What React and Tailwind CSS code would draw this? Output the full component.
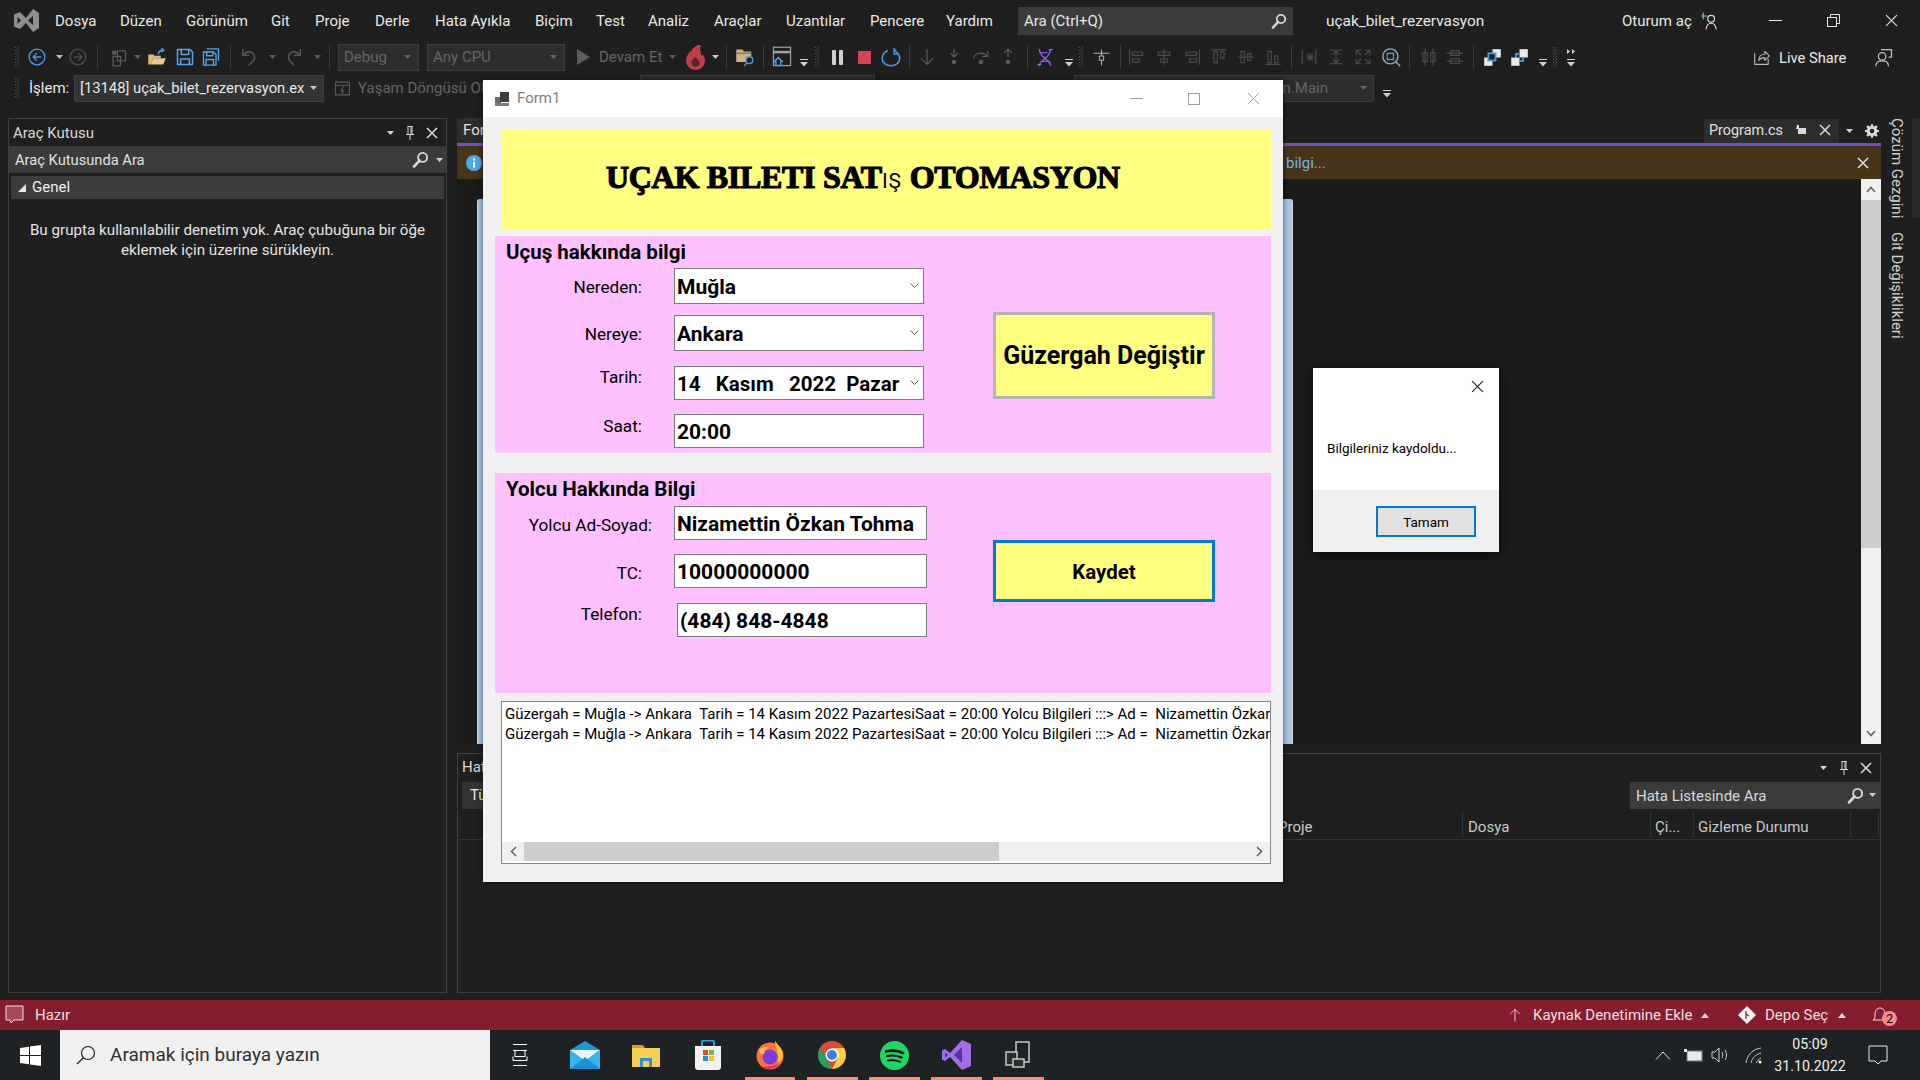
import React from "react";

const Strip = ({ items, className }) => {
  let prev = 0;
  return (
    <div className={"flex items-center " + (className || "")}>
      {items.map((it, i) => {
        const [x, w, node, start] = it;
        const m = x - prev;
        prev = x + w;
        return (
          <div key={i} className={start ? "flex items-center justify-start shrink-0 whitespace-nowrap" : "flex items-center justify-center shrink-0 whitespace-nowrap"} style={{ marginLeft: m, width: w }}>
            {node}
          </div>
        );
      })}
    </div>
  );
};
const C = (c, w, node) => [c - w / 2, w, node];
const L = (x, w, node) => [x, w, node, true];

const Ic = ({ s = 16, w, h, vb = "0 0 16 16", sw = 1, color = "currentColor", fill = "none", children }) => (
  <svg width={w || s} height={h || s} viewBox={vb} fill={fill} stroke={color} strokeWidth={sw} strokeLinecap="round" strokeLinejoin="round">{children}</svg>
);

const Grip = () => (
  <svg width="7" height="22" viewBox="0 0 7 22" fill="#555">
    {[1, 4, 7, 10, 13, 16, 19].map((y) => (
      <g key={y}><rect x="1" y={y} width="1" height="1" /><rect x="4" y={y} width="1" height="1" /><rect x="2.5" y={y + 1.5} width="1" height="1" /></g>
    ))}
  </svg>
);
const Sep = () => <div className="w-px h-[24px] bg-[#3a3a3a]" />;
const Arr = ({ c = "#8a8a8a" }) => <svg width="7" height="4" viewBox="0 0 7 4"><path d="M0 0h7L3.5 4z" fill={c} /></svg>;
const ArrUp = ({ c = "#f0d8dc" }) => <svg width="8" height="5" viewBox="0 0 8 5"><path d="M0 5h8L4 0z" fill={c} /></svg>;
const Ovf = () => <svg className="mt-[11px]" width="8" height="8" viewBox="0 0 8 8"><path d="M0 .5h8" stroke="#cfcfcf" strokeWidth="1" /><path d="M0 3h8L4 7.500z" fill="#cfcfcf" /></svg>;

const Back = () => <Ic s={18} color="#4a9ae8" sw={1.2}><circle cx="8" cy="8" r="7" /><path d="M11.5 8h-7M7.5 5 4.5 8l3 3" /></Ic>;
const Fwd = () => <Ic s={18} color="#4e4e4e" sw={1.2}><circle cx="8" cy="8" r="7" /><path d="M4.5 8h7M8.5 5l3 3-3 3" /></Ic>;
const NewI = () => <Ic s={20} color="#5d5d5d"><path d="M5 3v3M3.5 4.5h3M3.8 3.3l2.4 2.4M6.2 3.3 3.8 5.7" /><rect x="7.5" y="3" width="6.5" height="8" /><rect x="4" y="7.5" width="6" height="7.5" /></Ic>;
const OpenI = () => (
  <svg width="20" height="20" viewBox="0 0 16 16"><path d="M1 14V6h4l1 1h5v2H5l-2 5z" fill="#dcb67a" /><path d="M3 14l2-5h10l-2 5z" fill="#e8c88e" /><path d="M9 6c0-2.5 2-3.5 4-3.5M11.5 1l2 1.5-2 1.5" stroke="#4a9ae8" strokeWidth="1.2" fill="none" /></svg>
);
const Save = () => <Ic s={20} color="#5aa2ea" sw={1.2}><path d="M2 2h10l2 2v10H2z" /><path d="M5 2v4h6V2M4.5 14V9.5h7V14" /></Ic>;
const SaveAll = () => <Ic s={20} color="#5aa2ea" sw={1.1}><path d="M5 1.5h9v9" /><path d="M2 4h8l2 2v8.5H2z" /><path d="M4.5 4v3h5V4M4 14.5V10h6v4.5" /></Ic>;
const Undo = () => <Ic s={20} color="#5d5d5d" sw={1.1}><path d="M3 2v4.5h4.5" /><path d="M3.5 6.5C5 4 8 3 10.5 4.5c2.5 1.5 2.5 5 .5 7l-3 3" /></Ic>;
const Redo = () => <Ic s={20} color="#5d5d5d" sw={1.1}><path d="M13 2v4.5H8.5" /><path d="M12.5 6.5C11 4 8 3 5.5 4.5c-2.5 1.5-2.5 5-.5 7l3 3" /></Ic>;
const Fire = () => (
  <svg width="19" height="25" viewBox="0 0 16 21"><path d="M12 0c-4 1-7 3-7 6 0 .8.2 1.500.4 2C4.500 7.500 4 6.500 4 5.500 2 7.500.5 10 .5 13c0 4.500 3.300 7.500 7.500 7.500s7.500-3 7.500-7.500c0-2-.7-3.500-1.500-4.500 0 1-.3 2-1 2.500C13 8 10.500 5 12 0z" fill="#c23b46" stroke="#d9604e" strokeWidth="0.6" /><path d="M8 10c-2.500 1.500-3.500 3-3.500 5 0 2 1.500 3.500 3.500 3.500s3.500-1.500 3.500-3.500c0-2-2-3-3.500-5z" fill="#5a262b" /></svg>
);
const FolderSearch = () => (
  <svg width="20" height="20" viewBox="0 0 16 16"><path d="M1 2h5l1 1.500h6V12H1z" fill="#cdb283" /><path d="M1 5h12" stroke="#8a7550" /><circle cx="11.500" cy="10.500" r="2.700" fill="#1f1f1f" stroke="#4a9ae8" strokeWidth="1.1" /><path d="M9.500 12.500 7.500 15" stroke="#4a9ae8" strokeWidth="1.1" /></svg>
);
const WinHome = () => (
  <svg width="20" height="22" viewBox="0 0 16 18" fill="none"><rect x="1" y="1" width="14" height="15" stroke="#a0a0a0" /><path d="M1 5h14" stroke="#a0a0a0" strokeWidth="2" /><path d="M1.500 13 5 9.500 8.500 13M3 12v4h4v-4" stroke="#4a9ae8" strokeWidth="1.2" fill="#1f1f1f" /></svg>
);
const Pause = () => <div className="flex gap-[3px]"><div className="w-[4px] h-[15px] bg-[#d0d0d0] rounded-[1px]" /><div className="w-[4px] h-[15px] bg-[#d0d0d0] rounded-[1px]" /></div>;
const Restart = () => <Ic s={20} color="#4a9ae8" sw={1.2}><path d="M10.500 1.500v4h3.500" /><path d="M5 3C2.500 4.500 1 6.500 1 9c0 3.500 3 6 7 6s7-2.500 7-6c0-1.500-.5-2.500-1.500-3.500-1-1-2-2.500-3-4" /></Ic>;
const StepD = () => <Ic s={18} color="#5d5d5d"><path d="M8 1.500v13M3 9.500l5 5 5-5" /></Ic>;
const StepI = () => <Ic s={18} color="#5d5d5d"><path d="M8 1v7M5 5l3 3 3-3" /><circle cx="8" cy="12.500" r="1.500" fill="#5d5d5d" /></Ic>;
const StepO = () => <Ic s={18} color="#5d5d5d"><path d="M1.500 9C2.500 4 10 3 13 7M14 3v4.500H9.500" /><circle cx="8" cy="12.500" r="1.500" fill="#5d5d5d" /></Ic>;
const StepU = () => <Ic s={18} color="#5d5d5d"><path d="M8 8V1M5 4l3-3 3 3" /><circle cx="8" cy="12.500" r="1.500" fill="#5d5d5d" /></Ic>;
const Dna = () => (
  <svg width="20" height="20" viewBox="0 0 16 16" fill="none"><path d="M3.500 15c0-5 9-6 9-13.500" stroke="#7c5ae0" strokeWidth="1.200" /><path d="M3.500 1.500C3.500 9 12.500 10 12.500 15" stroke="#8a5cd8" strokeWidth="1.200" /><path d="M4 4.500h6M6 11.500h6" stroke="#7c5ae0" /><path d="M11 2h3M2 14h3" stroke="#4a9ae8" /></svg>
);
const Thing = () => <Ic s={17} color="#b0b0b0"><path d="M1 4h14M8 1v14" /><rect x="6" y="6.500" width="4" height="4" fill="#1f1f1f" /></Ic>;
const Al = ({ d }) => <Ic s={18} color="#4c4c4c"><path d={d} /></Ic>;
const aligns = [
  "M1.500 1.500v13M4 3.500h9v3H4zM4 9.500h6v3H4z",
  "M8 1.500v13M3 3.500h10v3H3zM5 9.500h6v3H5z",
  "M14.500 1.500v13M3 3.500h9v3H3zM6 9.500h6v3H6z",
  "M1.500 1.500h13M3.500 3v10h3V3zM9.500 3v6h3V3z",
  "M1.500 8h13M3.500 3v10h3V3zM9.500 5v6h3V5z",
  "M1.500 14.500h13M3.500 3v10h3V3zM9.500 7v6h3V7z",
  "M2 2v12M5.500 8h7M9 4.500v7M6.500 5.500l5 5M11.500 5.500l-5 5M14 2v12",
  "M3 2h10M3 14h10M8 3v10M5.500 5.500 8 3l2.500 2.500M5.500 10.500 8 13l2.500-2.500",
  "M2 6V2h4M10 2h4v4M2 10v4h4M14 10v4h-4M3 3l3 3M13 3l-3 3M3 13l3-3M13 13l-3-3",
];
const Zoom = () => <Ic s={20} color="#a8a8a8" sw={1.1}><circle cx="7.500" cy="7.500" r="6" /><path d="m12 12 3 3" /><path d="M5 7V5h2M10 7V5H8M5 8v2h2M10 8v2H8" stroke="#4a9ae8" /></Ic>;
const Dup1 = () => (
  <svg width="19" height="19" viewBox="0 0 16 16"><rect x="8" y="1" width="7" height="7" fill="#e8e8e8" /><rect x="1" y="8" width="7" height="7" fill="#e8e8e8" /><rect x="4.500" y="4.500" width="6" height="6" fill="#1f1f1f" stroke="#4a9ae8" strokeWidth="1.500" /></svg>
);
const Dup2 = () => (
  <svg width="19" height="19" viewBox="0 0 16 16"><rect x="8" y="1" width="7" height="7" fill="#e8e8e8" /><rect x="1" y="8" width="7" height="7" fill="#e8e8e8" /><path d="M8 5H5v3M11 8v3H8" fill="none" stroke="#4a9ae8" strokeWidth="1.500" /></svg>
);
const Search = ({ s = 17, c = "#d8d8d8" }) => (
  <svg width={s} height={s} viewBox="0 0 16 16" fill="none"><circle cx="10" cy="6" r="4.200" stroke={c} strokeWidth="1.800" /><path d="M7 9 2 14.500" stroke={c} strokeWidth="2.600" strokeLinecap="round" /></svg>
);
const Pin = ({ c = "#d8d8d8" }) => <svg width="12" height="16" viewBox="0 0 12 16" fill="none" stroke={c}><path d="M3.500 1.500h5M4 1.500v8M8 1.500v8M2 9.500h8M6 9.500V15" /><path d="M7 2v7" /></svg>;
const Cross = ({ s = 12, c = "#d8d8d8", sw = 1.600 }) => <svg width={s} height={s} viewBox="0 0 12 12" stroke={c} strokeWidth={sw} fill="none"><path d="M1 1l10 10M11 1 1 11" /></svg>;
const Chev = () => <svg width="9" height="6" viewBox="0 0 9 6" fill="none" stroke="#606060"><path d="m.5.500 4 4 4-4" /></svg>;

const Logo = () => (
  <svg width="26" height="25" viewBox="0 0 26 25"><path d="M0 6.500 6 4l6 6 7-9 6 4v15l-6 4-7-9-6 6-6-2.500z" fill="#8f8f8f" /><path d="M3.500 9v7l3.500-3.500zM19 8l-5 4.500 5 4.500z" fill="#1f1f1f" /></svg>
);

const row2 = [
  C(17, 7, <Grip />), C(37, 18, <Back />), C(59, 7, <Arr c="#c0c0c0" />), C(78, 18, <Fwd />), C(97, 1, <Sep />), C(118, 20, <NewI />), C(137, 7, <Arr c="#5d5d5d" />), C(157, 20, <OpenI />), C(185, 20, <Save />), C(211, 20, <SaveAll />), C(230, 1, <Sep />), C(249, 20, <Undo />), C(272, 7, <Arr c="#5d5d5d" />), C(294, 20, <Redo />), C(317, 7, <Arr c="#5d5d5d" />), C(329, 1, <Sep />),
  [338, 81, <div className="w-full h-[27px] bg-[#2d2d2d] border border-[#3c3c3c] flex items-center justify-between pl-[5px] pr-[7px] text-[#656565]"><span>Debug</span><Arr c="#656565" /></div>],
  [427, 138, <div className="w-full h-[27px] bg-[#2d2d2d] border border-[#3c3c3c] flex items-center justify-between pl-[5px] pr-[7px] text-[#656565]"><span>Any CPU</span><Arr c="#656565" /></div>],
  C(583, 13, <svg width="13" height="16" viewBox="0 0 13 16"><path d="M0 0l13 8-13 8z" fill="#5d5d5d" /></svg>),
  L(599, 66, <span className="text-[#656565]">Devam Et</span>), C(672, 7, <Arr c="#5d5d5d" />), C(695, 19, <Fire />), C(715, 7, <Arr c="#c8c8c8" />), C(726, 1, <Sep />), C(745, 20, <FolderSearch />), C(763, 1, <Sep />), C(782, 20, <WinHome />), C(804, 9, <Ovf />), C(817, 7, <Grip />), C(837, 11, <Pause />),
  C(864, 13, <div className="w-[13px] h-[13px] bg-[#d24453]" />), C(891, 20, <Restart />), C(909, 1, <Sep />), C(927, 18, <StepD />), C(954, 18, <StepI />), C(981, 18, <StepO />), C(1008, 18, <StepU />), C(1027, 1, <Sep />), C(1045, 20, <Dna />), C(1069, 9, <Ovf />), C(1081, 7, <Grip />), C(1101, 17, <Thing />), C(1120, 1, <Sep />),
  C(1137, 18, <Al d={aligns[0]} />), C(1164, 18, <Al d={aligns[1]} />), C(1192, 18, <Al d={aligns[2]} />), C(1219, 18, <Al d={aligns[3]} />), C(1246, 18, <Al d={aligns[4]} />), C(1273, 18, <Al d={aligns[5]} />), C(1291, 1, <Sep />), C(1309, 18, <Al d={aligns[6]} />), C(1336, 18, <Al d={aligns[7]} />), C(1363, 18, <Al d={aligns[8]} />), C(1391, 20, <Zoom />), C(1409, 1, <Sep />),
  C(1429, 18, <Al d="M4.500 1v14M11.500 1v14M2.500 4h4v8h-4zM9.500 4h4v8h-4z" />), C(1455, 18, <Al d="M1 4.500h14M1 11.500h14M4 2.500h8v4H4zM4 9.500h8v4H4z" />), C(1473, 1, <Sep />), C(1492, 19, <Dup1 />), C(1519, 19, <Dup2 />), C(1543, 9, <Ovf />), C(1555, 7, <Grip />),
  C(1571, 9, <div className="flex flex-col items-center gap-[5px] mt-[2px]"><svg width="8" height="5" viewBox="0 0 8 5" fill="#cfcfcf"><path d="M0 0l3 2.500L0 5zM5 0l3 2.500L5 5z" /></svg><svg width="8" height="8" viewBox="0 0 8 8"><path d="M0 .5h8" stroke="#cfcfcf" strokeWidth="1" /><path d="M0 3h8L4 7.500z" fill="#cfcfcf" /></svg></div>),
  C(1762, 18, <Ic s={18} color="#b8b8b8"><path d="M1.500 5v9.500h12V10" /><path d="M5 11c0-4 3-5.500 5.500-5.500V3l4 4-4 4V8.500C8 8.500 6 9.500 5 11z" /></Ic>),
  L(1779, 70, <span className="text-[#e8e8e8] text-[14.7px] pt-[2px]">Live Share</span>),
  C(1884, 20, <Ic s={20} color="#c0c0c0"><circle cx="6.500" cy="7.500" r="3" /><path d="M1.500 15c0-3 2-4 5-4s5 1 5 4" /><path d="M6 2h8v6h-2" /></Ic>),
];

const menu = [[55, "Dosya"], [120, "Düzen"], [186, "Görünüm"], [271, "Git"], [315, "Proje"], [375, "Derle"], [435, "Hata Ayıkla"], [535, "Biçim"], [596, "Test"], [648, "Analiz"], [714, "Araçlar"], [786, "Uzantılar"], [870, "Pencere"], [946, "Yardım"]];
const menuW = [45, 50, 65, 25, 40, 40, 80, 45, 35, 45, 55, 65, 55, 50];

const Field = ({ w, chev, children }) => (
  <div className={"h-full bg-white border border-[#7a7a7a] flex items-center justify-between pl-[2px] pr-[3px] text-black font-bold text-[21px] whitespace-nowrap " + w}>
    <span className="pt-[3px]">{children}</span>
    {chev && <span className="mr-[1px]"><Chev /></span>}
  </div>
);
const Lab = ({ cls, children }) => <div className={"text-right text-[17.2px] text-black whitespace-nowrap " + cls}>{children}</div>;

const line = "Güzergah = Muğla -> Ankara  Tarih = 14 Kasım 2022 PazartesiSaat = 20:00 Yolcu Bilgileri :::> Ad =  Nizamettin Özkan Tohma TC = 10000000000";

const Form = () => (
  <div className="absolute left-[483px] top-[80px] w-[800px] h-[802px] flex flex-col bg-[#f0f0f0] shadow-[0_0_6px_rgba(0,0,0,0.6)]">
    <div className="h-[37px] bg-white flex items-center">
      <Strip className="w-full" items={[
        C(19, 16, <svg width="16" height="16" viewBox="0 0 16 16"><rect x="1" y="6" width="6" height="9" fill="#6b6b6b" /><rect x="6" y="1" width="9" height="10" fill="#3c3c3c" /><rect x="1" y="12" width="14" height="3" fill="#7a7a7a" /></svg>),
        L(34, 50, <span className="text-[15px] text-[#7f7f7f]">Form1</span>),
        C(653, 13, <div className="w-[13px] h-px bg-[#a0a0a0]" />),
        C(711, 12, <div className="w-[12px] h-[12px] border border-[#a0a0a0]" />),
        C(770, 13, <Cross s={13} c="#a0a0a0" sw={0.9} />),
      ]} />
    </div>
    <div className="ml-[18px] mt-[12px] w-[770px] h-[101px] bg-[#ffff80] flex items-center shrink-0">
      <div className="ml-[105px] mb-[5px] text-black font-['Liberation_Serif',serif] font-bold text-[32px] tracking-[-0.3px] [-webkit-text-stroke:1.2px_black] whitespace-nowrap leading-none">
        UÇAK BILETI SAT<span className="font-['Roboto',sans-serif] font-normal text-[21px] [-webkit-text-stroke:0px] tracking-[1px]">IŞ</span> OTOMASYON
      </div>
    </div>

    <div className="relative ml-[12px] mt-[6px] w-[776px] h-[217px] bg-[#ffc0ff] border-b border-[#eed2ee] flex shrink-0">
      <div className="absolute left-[190px] right-0 top-[13px] h-px bg-[#f2c8f2]" />
      <div className="w-[498px]">
        <div className="h-[29px] pl-[11px] pt-[3px] leading-[26px] font-bold text-[20.5px] text-black">Uçuş hakkında bilgi</div>
        <div className="flex items-center h-[36px] mt-[3px]"><Lab cls="w-[147px] mr-[32px] mt-[4px]">Nereden:</Lab><Field w="w-[250px]" chev>Muğla</Field></div>
        <div className="flex items-center h-[36px] mt-[11px]"><Lab cls="w-[147px] mr-[32px] mt-[4px]">Nereye:</Lab><Field w="w-[250px]" chev>Ankara</Field></div>
        <div className="flex items-center h-[34px] mt-[15px]"><Lab cls="w-[147px] mr-[32px] mb-[10px]">Tarih:</Lab><Field w="w-[250px]" chev><span className="whitespace-pre text-[20.5px]">14   Kasım   2022  Pazar</span></Field></div>
        <div className="flex items-center h-[34px] mt-[14px]"><Lab cls="w-[147px] mr-[32px] mb-[8px]">Saat:</Lab><Field w="w-[250px]">20:00</Field></div>
      </div>
      <div className="mt-[76px] w-[222px] h-[87px] bg-[#ffff80] border-[3px] border-[#b4b4b4] flex items-center justify-center font-bold text-[25px] text-black">Güzergah Değiştir</div>
    </div>

    <div className="relative ml-[12px] mt-[20px] w-[776px] h-[220px] bg-[#ffc0ff] flex shrink-0">
      <div className="absolute left-[200px] right-0 top-[13px] h-px bg-[#f2c8f2]" />
      <div className="w-[498px]">
        <div className="h-[29px] pl-[11px] pt-[3px] leading-[26px] font-bold text-[20.5px] text-black">Yolcu Hakkında Bilgi</div>
        <div className="flex items-center h-[34px] mt-[4px]"><Lab cls="w-[157px] mr-[22px] mt-[6px]">Yolcu Ad-Soyad:</Lab><Field w="w-[253px]">Nizamettin Özkan Tohma</Field></div>
        <div className="flex items-center h-[34px] mt-[14px]"><Lab cls="w-[147px] mr-[32px] mt-[6px]">TC:</Lab><Field w="w-[253px]">10000000000</Field></div>
        <div className="flex items-center h-[34px] mt-[15px]"><Lab cls="w-[147px] mr-[35px] mb-[10px]">Telefon:</Lab><Field w="w-[250px]">(484) 848-4848</Field></div>
      </div>
      <div className="mt-[67px] w-[222px] h-[62px] bg-[#ffff80] border-[3px] border-[#0078d7] flex items-center justify-center pt-[3px] font-bold text-[20.5px] text-black">Kaydet</div>
    </div>

    <div className="ml-[18px] mt-[8px] w-[770px] h-[163px] bg-white border border-[#828790] flex flex-col shrink-0 overflow-hidden">
      <div className="flex-1 pl-[3px] pt-[2px] overflow-hidden text-[15px] leading-[20px] text-black whitespace-pre">
        <div>{line}</div>
        <div>{line}</div>
      </div>
      <div className="h-[19px] mb-[2px] bg-[#f0f0f0] flex items-center">
        <div className="w-[22px] flex justify-center"><svg width="7" height="11" viewBox="0 0 7 11" fill="none" stroke="#606060" strokeWidth="1.500"><path d="M6 1 1.500 5.500 6 10" /></svg></div>
        <div className="w-[475px] h-full bg-[#cdcdcd]" />
        <div className="flex-1" />
        <div className="w-[22px] flex justify-center"><svg width="7" height="11" viewBox="0 0 7 11" fill="none" stroke="#606060" strokeWidth="1.500"><path d="M1 1l4.500 4.500L1 10" /></svg></div>
      </div>
    </div>
  </div>
);

const Dialog = () => (
  <div className="absolute left-[1313px] top-[368px] w-[186px] h-[184px] flex flex-col shadow-[0_2px_12px_rgba(0,0,0,0.7)]">
    <div className="h-[122px] bg-white flex flex-col">
      <div className="h-[36px] flex justify-end items-center pr-[15px]"><Cross s={13} c="#222" sw={1} /></div>
      <div className="pl-[14px] pt-[35px] text-[13.5px] leading-[18px] text-black whitespace-nowrap">Bilgileriniz kaydoldu...</div>
    </div>
    <div className="flex-1 bg-[#f0f0f0] pl-[63px] pt-[16px]">
      <div className="w-[100px] h-[31px] bg-[#e1e1e1] border-2 border-[#0078d7] flex items-center justify-center pt-[1px] text-[13.5px] text-black">Tamam</div>
    </div>
  </div>
);

const TBI = {
  task: <svg width="22" height="24" viewBox="0 0 22 24" fill="none" stroke="#fff"><path d="M2 1.500h14M2 7.500h14M2 13.500v4h14v-4M2 22.500h14M19 3v0M19 8v0" /><rect x="4" y="7.500" width="10" height="6" /></svg>,
  mail: <svg width="30" height="28" viewBox="0 0 30 28"><path d="M0 9 15 0l15 9v19H0z" fill="#1b9ad6" /><path d="M0 9h30L15 20z" fill="#e8f4fb" /><path d="M0 9l15 11L30 9v19H0z" fill="#37b5ec" /><path d="M0 28l15-12 15 12z" fill="#1e8fd0" /></svg>,
  folder: <svg width="28" height="24" viewBox="0 0 28 24"><path d="M0 2h11l2 3H0z" fill="#d49b1f" /><path d="M0 5h28v19H0z" fill="#f6cf55" /><path d="M8 24v-9h12v9h-3v-6h-6v6z" fill="#3a8ed8" /></svg>,
  store: <svg width="28" height="30" viewBox="0 0 28 30"><path d="M1 6h26v21c0 2-1 3-3 3H4c-2 0-3-1-3-3z" fill="#f2f2f2" /><path d="M8 6V2c0-1 1-1.500 2-1.500h8c1 0 2 .5 2 1.500v4" fill="none" stroke="#28a0e0" strokeWidth="2" /><rect x="9" y="10" width="5" height="5" fill="#e64a19" /><rect x="15" y="10" width="5" height="5" fill="#7cb342" /><rect x="9" y="16" width="5" height="5" fill="#1e90e0" /><rect x="15" y="16" width="5" height="5" fill="#fbc02d" /></svg>,
  firefox: <svg width="30" height="30" viewBox="0 0 30 30"><circle cx="15" cy="16" r="13.500" fill="#ff7139" /><path d="M20 0c1 4 8 8 8 15 0 3-2 6-5 8 2-8-3-14-3-23z" fill="#ffc22e" /><circle cx="15" cy="17" r="7.500" fill="#7a3fd8" /><path d="M4 10c3-3 7-4 10-2-3 1-5 3-5 6-2 1-4 0-5-4z" fill="#ffbd4f" /><path d="M7 27c5 3 14 2 18-4-4 3-12 4-18 4z" fill="#e31587" /></svg>,
  chrome: <svg width="28" height="28" viewBox="0 0 28 28"><circle cx="14" cy="14" r="14" fill="#dd4b39" /><path d="M14 28a14 14 0 0 1-12-21l7 12z" fill="#1da462" /><path d="M14 28a14 14 0 0 0 12-21H14l6 10z" fill="#ffcd46" /><circle cx="14" cy="14" r="6.500" fill="#fff" /><circle cx="14" cy="14" r="5" fill="#3b82e0" /></svg>,
  spotify: <svg width="29" height="29" viewBox="0 0 29 29" fill="none"><circle cx="14.500" cy="14.500" r="14.500" fill="#1ed760" /><path d="M6 10.500c6-1.500 12-1 17 1.500" stroke="#111" strokeWidth="2.600" strokeLinecap="round" /><path d="M7 15c5-1 10-.5 14.500 1.500" stroke="#111" strokeWidth="2.200" strokeLinecap="round" /><path d="M8 19.500c4.500-.8 8.500-.3 12 1.300" stroke="#111" strokeWidth="1.800" strokeLinecap="round" /></svg>,
  vs: <svg width="30" height="30" viewBox="0 0 30 30"><path d="M21 0 30 4v22l-9 4L9 17l-5 4-3-1.500v-9L4 9l5 4z" fill="#a06fe0" /><path d="M21 7v16l-8-8z" fill="#5b2fa8" /><path d="M4 12v6l3-3z" fill="#5b2fa8" /></svg>,
  multi: <svg width="26" height="28" viewBox="0 0 26 28" fill="none" stroke="#c8c8c8" strokeWidth="1.500"><rect x="11" y="1" width="13" height="20" /><rect x="1" y="11" width="11" height="13" fill="#2a2c2e" /><rect x="8" y="18" width="11" height="8" fill="#2a2c2e" /></svg>,
};

export default function App() {
  return (
    <div className="relative w-[1920px] h-[1080px] overflow-hidden bg-[#1f1f1f] flex flex-col font-['Roboto',sans-serif] text-[15px] text-[#e8e8e8]">
      {/* Title / menu */}
      <div className="relative h-[41px] shrink-0">
        <Strip className="h-full" items={[
          C(27, 26, <Logo />),
          ...menu.map((m, i) => L(m[0], menuW[i], <span className="pt-[2px]">{m[1]}</span>)),
          [1018, 275, <div className="w-full h-[28px] bg-[#3b3b3b] flex items-center justify-between pl-[6px] pr-[6px]"><span className="pt-[1px]">Ara (Ctrl+Q)</span><Search s={16} /></div>],
          L(1326, 165, <span className="text-[15.4px] pt-[2px]">uçak_bilet_rezervasyon</span>),
          L(1622, 72, <span className="pt-[2px]">Oturum aç</span>),
          C(1710, 18, <Ic s={18} color="#e0e0e0"><circle cx="9" cy="6" r="3" /><path d="M4.500 15c.5-3 2-5 4.500-5s4 2 4.500 5" /><path d="M2 1v5M0 3.500h5" stroke="#7fd67f" /></Ic>),
          C(1775, 13, <div className="w-[13px] h-px bg-[#e8e8e8]" />),
          C(1833, 13, <svg width="13" height="13" viewBox="0 0 13 13" fill="none" stroke="#e8e8e8"><rect x=".5" y="3.500" width="9" height="9" /><path d="M3.500 3.500v-3h9v9h-3" /></svg>),
          C(1891, 13, <Cross s={13} c="#e8e8e8" sw={1} />),
        ]} />
      </div>
      {/* Toolbar 1 */}
      <Strip className="h-[32px] shrink-0" items={row2} />
      {/* Toolbar 2 */}
      <Strip className="h-[30px] shrink-0" items={[
        C(17, 7, <Grip />),
        L(29, 42, <span>İşlem:</span>),
        [74, 250, <div className="w-full h-[27px] bg-[#333] border border-[#3f3f3f] flex items-center justify-between pl-[5px] pr-[6px]"><span className="w-[224px] overflow-hidden text-[14.8px]">[13148] uçak_bilet_rezervasyon.exe</span><Arr c="#c8c8c8" /></div>],
        C(342, 17, <Ic s={17} color="#5d5d5d"><rect x="1.500" y="2" width="13" height="12" /><path d="M1.500 5h13M9 6.500 6.500 10H9l-1.500 3" /></Ic>),
        L(358, 125, <span className="text-[#656565]">Yaşam Döngüsü Olayları</span>),
        [640, 235, <div className="w-full h-[27px] bg-[#2d2d2d] border border-[#3c3c3c]" />],
        [1074, 300, <div className="w-full h-[27px] bg-[#2d2d2d] border border-[#3c3c3c] flex items-center justify-end pr-[6px] text-[#656565] gap-[32px]"><span>n.Main</span><Arr c="#656565" /></div>],
        C(1387, 9, <Ovf />),
      ]} />

      {/* Main */}
      <div className="h-[875px] mt-[15px] shrink-0 flex pl-[8px]">
        {/* Toolbox */}
        <div className="w-[439px] border border-[#3f3f3f] border-t-[#3f3f3f] flex flex-col">
          <Strip className="h-[27px] text-[#d8d8d8]" items={[
            L(4, 100, <span className="pt-[1px]">Araç Kutusu</span>),
            C(381, 9, <Arr c="#d8d8d8" />),
            C(401, 12, <Pin />),
            C(423, 12, <Cross />),
          ]} />
          <Strip className="h-[27px] bg-[#3b3b3b] text-[#e0e0e0]" items={[
            L(6, 150, <span className="pt-[2px] text-[14.7px]">Araç Kutusunda Ara</span>),
            C(411, 17, <Search />),
            C(430, 7, <Arr c="#d0d0d0" />),
          ]} />
          <div className="mx-[2px] mt-[3px] h-[23px] bg-[#3c3c3c] flex items-center pl-[7px] gap-[6px] text-[#f0f0f0]">
            <svg width="8" height="8" viewBox="0 0 8 8"><path d="M8 0v8H0z" fill="#e8e8e8" /></svg>
            <span>Genel</span>
          </div>
          <div className="mt-[21px] text-center leading-[20px] text-[15.2px] text-[#e4e4e4] px-[4px]">
            Bu grupta kullanılabilir denetim yok. Araç çubuğuna bir öğe<br />eklemek için üzerine sürükleyin.
          </div>
        </div>
        {/* Docs */}
        <div className="w-[1424px] ml-[10px] flex flex-col">
          <div className="h-[626px] flex flex-col">
            <div className="h-[25px] relative">
              <Strip className="h-full" items={[
                [0, 40, <div className="w-full h-[25px] bg-[#2d2d2d] flex items-center pl-[6px] text-[#e0e0e0]">Form1</div>],
                [1247, 135, <div className="w-full h-[24px] bg-[#2d2d2d] flex items-center pl-[5px] pt-[1px] text-[14.4px] text-[#e0e0e0]">Program.cs</div>],
                C(1392, 7, <Arr c="#d8d8d8" />),
                C(1415, 14, <svg width="14" height="14" viewBox="0 0 16 16" fill="#d8d8d8"><path d="M7 0h2l.4 2.200 1.500.6L12.800 1.500l1.700 1.700-1.300 1.900.6 1.500 2.200.4v2l-2.200.4-.6 1.500 1.300 1.900-1.700 1.700-1.900-1.300-1.500.6L9 16H7l-.4-2.200-1.500-.6-1.900 1.300-1.700-1.700 1.300-1.900-.6-1.500L0 9V7l2.200-.4.6-1.500-1.300-1.900 1.700-1.700 1.900 1.300 1.500-.6z" /><circle cx="8" cy="8" r="2.500" fill="#1f1f1f" /></svg>),
              ]} />
              <div className="absolute left-[1338px] top-[6px]"><svg width="12" height="12" viewBox="0 0 12 12" fill="#d8d8d8"><path d="M2 1h2v3h7v6H3V5H1z" /></svg></div>
              <div className="absolute left-[1362px] top-[6px]"><Cross /></div>
            </div>
            <div className="h-[3px] bg-[#6a52c8]" />
            <div className="h-[33px] bg-[#46341b]">
              <Strip className="h-full" items={[
                C(17, 16, <svg width="16" height="16" viewBox="0 0 16 16"><circle cx="8" cy="8" r="8" fill="#4ea6f0" /><rect x="7" y="7" width="2" height="5.500" fill="#fff" /><rect x="7" y="3.500" width="2" height="2" fill="#fff" /></svg>),
                L(829, 60, <span className="text-[#7cb0e0] pt-[1px]">bilgi...</span>),
                C(1406, 12, <Cross />),
              ]} />
            </div>
            <div className="flex-1 flex bg-[#1b1b1b] min-h-0">
              <div className="flex-1 pl-[20px] pt-[20px]">
                <div className="w-[816px] h-full bg-[#a9c7e4] rounded-t-[3px] border-l border-r border-[#d0d8e0]" />
              </div>
              <div className="w-[20px] bg-[#f0f0f0] flex flex-col items-center">
                <div className="h-[21px] flex items-center"><svg width="10" height="7" viewBox="0 0 10 7" fill="none" stroke="#606060" strokeWidth="1.500"><path d="M1 6l4-4.500L9 6" /></svg></div>
                <div className="w-full h-[348px] bg-[#cdcdcd]" />
                <div className="flex-1" />
                <div className="h-[21px] flex items-center"><svg width="10" height="7" viewBox="0 0 10 7" fill="none" stroke="#606060" strokeWidth="1.500"><path d="M1 1l4 4.500L9 1" /></svg></div>
              </div>
            </div>
          </div>
          {/* Error list */}
          <div className="mt-[9px] flex-1 border border-[#3f3f3f] flex flex-col">
            <Strip className="h-[27px] text-[#d8d8d8]" items={[
              L(4, 40, <span>Hata Listesi</span>),
              C(1365, 9, <Arr c="#d8d8d8" />),
              C(1386, 12, <Pin />),
              C(1408, 12, <Cross />),
            ]} />
            <Strip className="h-[28px]" items={[
              [4, 40, <div className="w-full h-[27px] bg-[#333] pl-[8px] flex items-center">Tüm</div>],
              [1172, 250, <div className="w-full h-[27px] bg-[#3b3b3b] flex items-center justify-between pl-[6px] pr-[4px] text-[#d8d8d8]"><span className="pt-[2px]">Hata Listesinde Ara</span><span className="flex items-center gap-[5px]"><Search /><Arr c="#d0d0d0" /></span></div>],
            ]} />
            <Strip className="h-[31px] pt-[6px] border-b border-[#333] text-[#c8c8c8]" items={[
              L(820, 60, <span>Proje</span>),
              C(1004, 1, <div className="w-px h-[26px] bg-[#333] -mt-[6px]" />),
              L(1010, 150, <span>Dosya</span>),
              C(1192, 1, <div className="w-px h-[26px] bg-[#333] -mt-[6px]" />),
              L(1197, 30, <span>Çi...</span>),
              C(1235, 1, <div className="w-px h-[26px] bg-[#333] -mt-[6px]" />),
              L(1240, 130, <span>Gizleme Durumu</span>),
              C(1392, 1, <div className="w-px h-[26px] bg-[#333] -mt-[6px]" />),
              C(1420, 1, <div className="w-px h-[26px] bg-[#333] -mt-[6px]" />),
            ]} />
          </div>
        </div>
        {/* Right rail */}
        <div className="flex-1 relative flex">
          <div className="w-[31px] flex flex-col items-center text-[#d0d0d0]">
            <div className="h-[114px] [writing-mode:vertical-rl] whitespace-nowrap">Çözüm Gezgini</div>
            <div className="[writing-mode:vertical-rl] whitespace-nowrap">Git Değişiklikleri</div>
          </div>
          <div className="w-[8px] h-[100px] bg-[#292929]" />
        </div>
      </div>

      {/* Status */}
      <div className="h-[30px] mt-[7px] shrink-0 bg-[#861d2e] text-[#f2dde0]">
        <Strip className="h-full" items={[
          C(15, 20, <svg width="20" height="20" viewBox="0 0 20 20" fill="#a3495a" stroke="#f2dde0"><path d="M1 1h17v14H9l-3 3-1-3H1z" /></svg>),
          L(35, 40, <span className="pt-[1px]">Hazır</span>),
          C(1515, 14, <Ic s={16} color="#f2dde0"><path d="M8 15V1.500M3 6.500l5-5 5 5" /></Ic>),
          L(1533, 165, <span className="pt-[1px]">Kaynak Denetimine Ekle</span>),
          C(1705, 8, <ArrUp />),
          C(1747, 18, <svg width="18" height="18" viewBox="0 0 18 18"><path d="M9 0l9 9-9 9-9-9z" fill="#f5f5f5" /><path d="M8 5v8M8 8l3 2" stroke="#861d2e" strokeWidth="1.200" /></svg>),
          L(1765, 66, <span className="pt-[1px]">Depo Seç</span>),
          C(1842, 8, <ArrUp />),
          [1871, 30, <div className="relative w-full h-[22px] flex items-center"><svg width="18" height="20" viewBox="0 0 18 20" fill="none" stroke="#f2dde0"><path d="M2 15c2-1 2-3 2-6 0-3 2-6 5-6s5 3 5 6c0 3 0 5 2 6z" /></svg><div className="absolute left-[11px] top-[7px] w-[15px] h-[15px] rounded-full bg-[#f78c8c] text-black text-[12px] flex items-center justify-center">2</div></div>],
        ]} />
      </div>

      {/* Taskbar */}
      <div className="relative h-[50px] shrink-0 bg-[#1f2224] text-white">
        <Strip className="h-full" items={[
          C(30, 21, <svg width="21" height="21" viewBox="0 0 21 21" fill="#fff"><path d="M0 3 9 1.700V10H0zM10 1.500 21 0v10H10zM0 11h9v8.300L0 18zM10 11h11v10l-11-1.500z" /></svg>),
          [60, 430, <div className="w-full h-[50px] bg-[#f0f0f0] flex items-center pl-[16px] text-[#303030] text-[19px]"><svg width="20" height="20" viewBox="0 0 20 20" fill="none" stroke="#222" strokeWidth="1.200"><circle cx="12" cy="8" r="6.500" /><path d="M7.500 12.500 1 19" /></svg><span className="ml-[14px]">Aramak için buraya yazın</span></div>],
          C(522, 22, TBI.task), C(585, 30, TBI.mail), C(646, 28, TBI.folder), C(708, 28, TBI.store), C(770, 30, TBI.firefox), C(832, 28, TBI.chrome), C(894, 29, TBI.spotify), C(956, 30, TBI.vs), C(1018, 26, TBI.multi),
          C(1663, 16, <svg width="16" height="9" viewBox="0 0 16 9" fill="none" stroke="#e8e8e8"><path d="M1 8.500 8 1l7 7.500" /></svg>),
          C(1693, 20, <svg width="20" height="14" viewBox="0 0 20 14"><rect x="4" y="3" width="15" height="10" fill="#e8e8e8" stroke="#777" /><path d="M1 1h3v3H1z" fill="#e8e8e8" /></svg>),
          C(1721, 20, <svg width="20" height="16" viewBox="0 0 20 16" fill="none" stroke="#d0d0d0"><path d="M1 5h3l4-4v14l-4-4H1zM11 5c1 2 1 4 0 6M14 3c2 3 2 7 0 10" /></svg>),
          C(1754, 20, <svg width="20" height="18" viewBox="0 0 20 18" fill="none" stroke="#c8c8c8"><path d="M17 2C9 3 3 9 2 17M17 7c-5 1-9 5-10 10M17 12c-2 1-4 3-5 5" /><circle cx="16" cy="16" r="1.500" fill="#fff" stroke="none" /></svg>),
          C(1810, 80, <div className="flex flex-col items-center text-[14.2px] leading-[22px] text-[#f0f0f0]"><span>05:09</span><span>31.10.2022</span></div>),
          C(1878, 20, <svg width="20" height="20" viewBox="0 0 20 20" fill="none" stroke="#e8e8e8"><path d="M1 1h18v15h-6l-3 3-3-3H1z" /></svg>),
        ]} />
        <div className="absolute left-[745px] bottom-0 w-[50px] h-[3px] bg-[#f0907a]" />
        <div className="absolute left-[807px] bottom-0 w-[51px] h-[3px] bg-[#f0907a]" />
        <div className="absolute left-[869px] bottom-0 w-[51px] h-[3px] bg-[#f0907a]" />
        <div className="absolute left-[931px] bottom-0 w-[51px] h-[3px] bg-[#f0907a]" />
        <div className="absolute left-[993px] bottom-0 w-[51px] h-[3px] bg-[#f0907a]" />
      </div>

      <Form />
      <Dialog />
    </div>
  );
}
